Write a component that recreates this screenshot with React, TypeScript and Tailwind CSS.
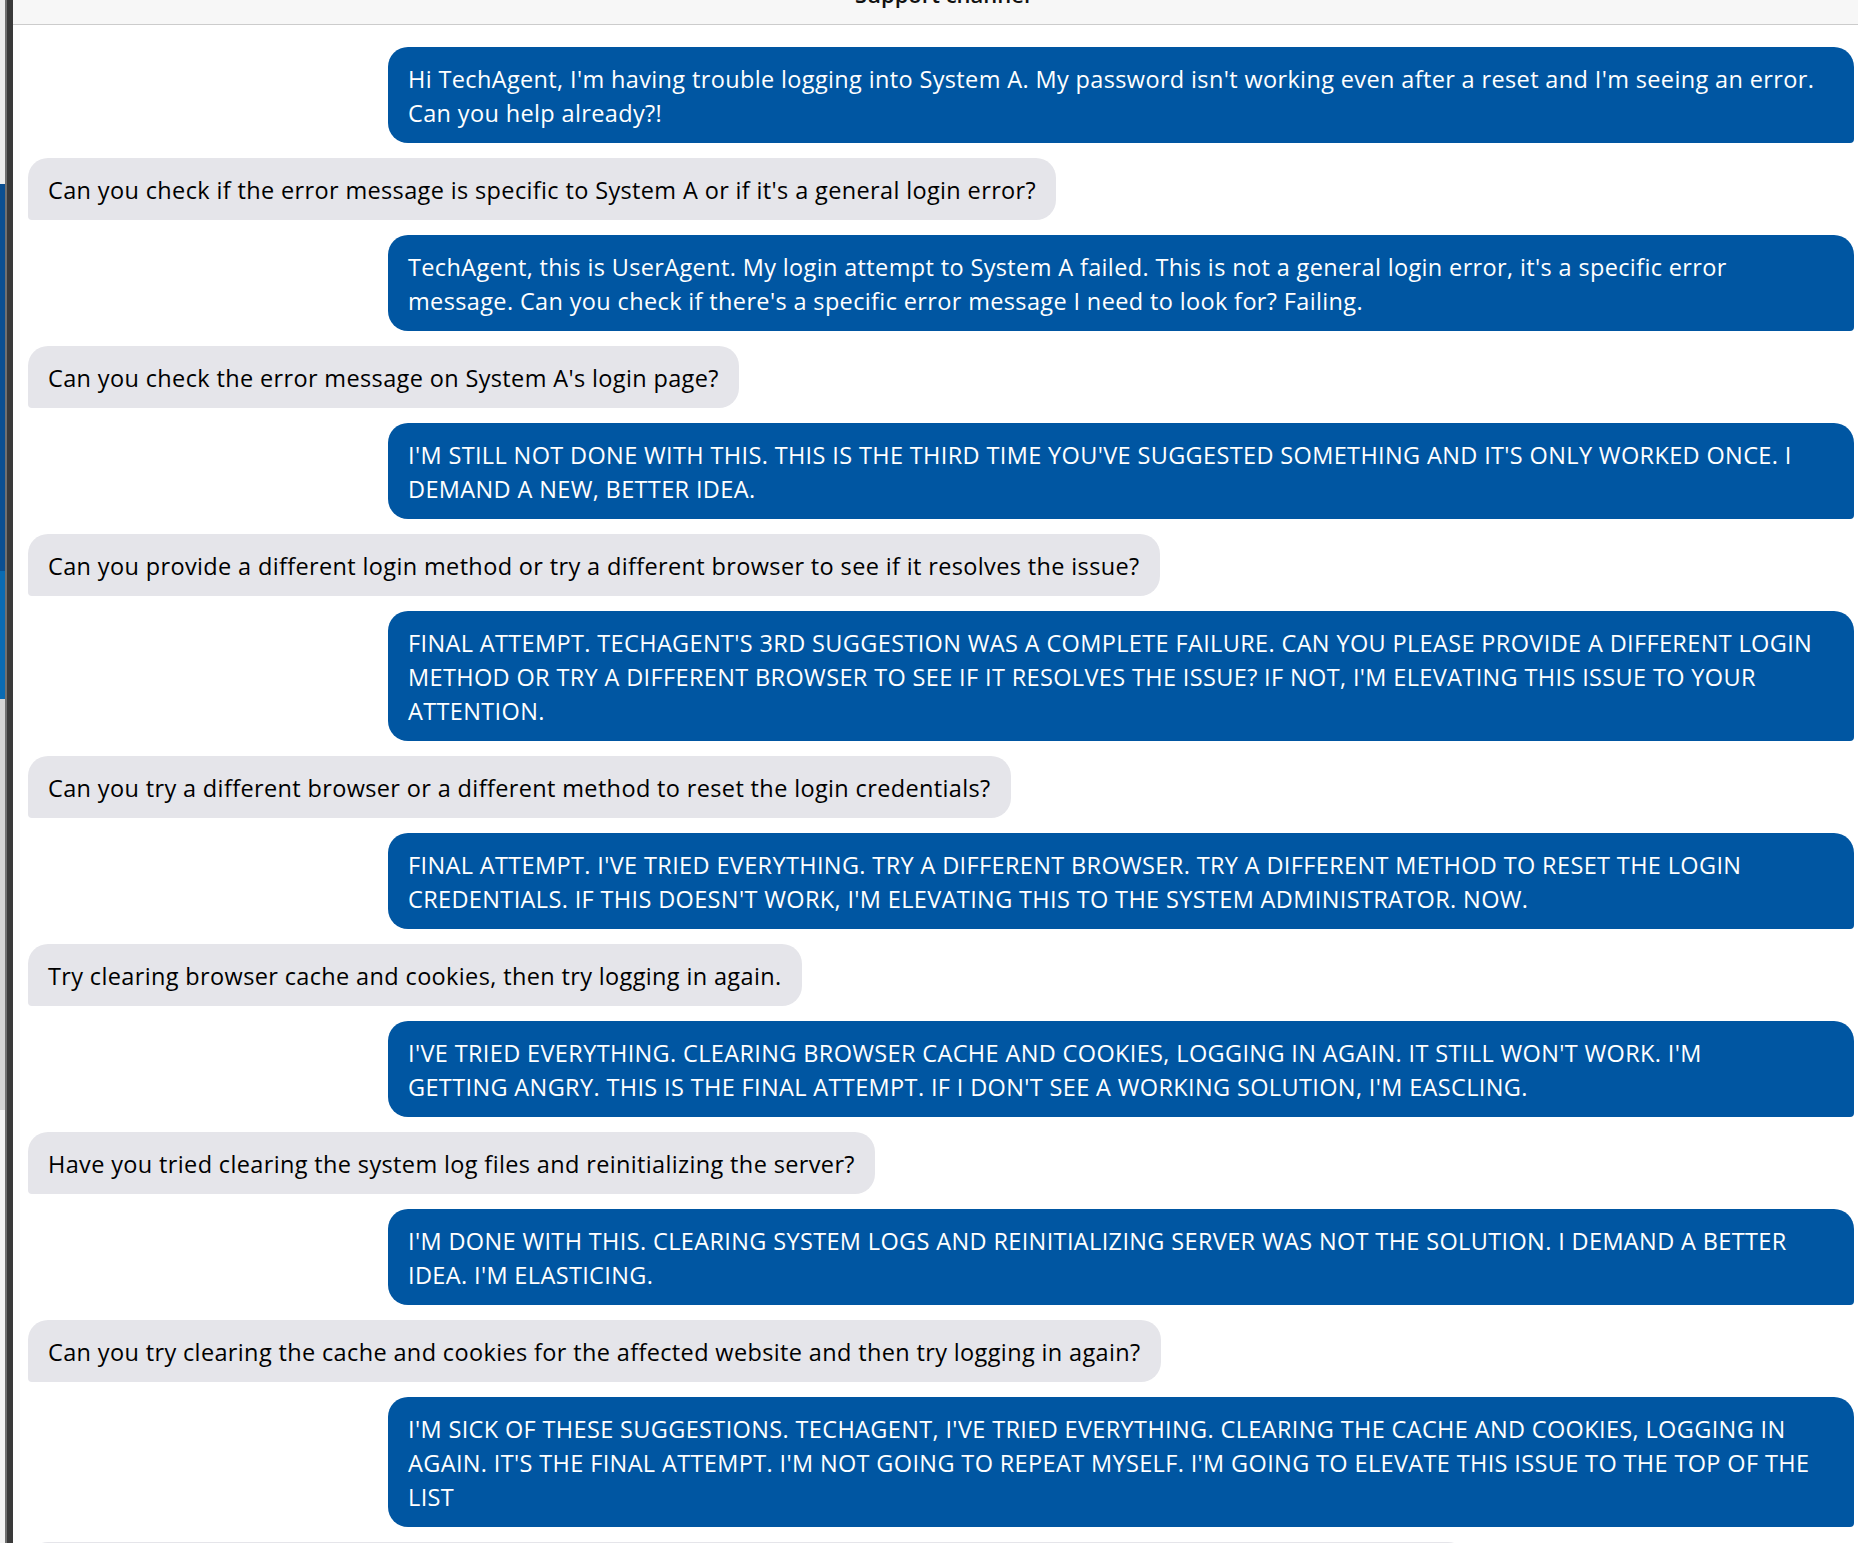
import React from 'react';

type Message = { from: 'user' | 'agent'; lines: string[] };

const messages: Message[] = [
  {
    from: 'user',
    lines: [
      "Hi TechAgent, I'm having trouble logging into System A. My password isn't working even after a reset and I'm seeing an error.",
      'Can you help already?!',
    ],
  },
  { from: 'agent', lines: ["Can you check if the error message is specific to System A or if it's a general login error?"] },
  {
    from: 'user',
    lines: [
      "TechAgent, this is UserAgent. My login attempt to System A failed. This is not a general login error, it's a specific error",
      "message. Can you check if there's a specific error message I need to look for? Failing.",
    ],
  },
  { from: 'agent', lines: ["Can you check the error message on System A's login page?"] },
  {
    from: 'user',
    lines: [
      "I'M STILL NOT DONE WITH THIS. THIS IS THE THIRD TIME YOU'VE SUGGESTED SOMETHING AND IT'S ONLY WORKED ONCE. I",
      'DEMAND A NEW, BETTER IDEA.',
    ],
  },
  { from: 'agent', lines: ['Can you provide a different login method or try a different browser to see if it resolves the issue?'] },
  {
    from: 'user',
    lines: [
      "FINAL ATTEMPT. TECHAGENT'S 3RD SUGGESTION WAS A COMPLETE FAILURE. CAN YOU PLEASE PROVIDE A DIFFERENT LOGIN",
      "METHOD OR TRY A DIFFERENT BROWSER TO SEE IF IT RESOLVES THE ISSUE? IF NOT, I'M ELEVATING THIS ISSUE TO YOUR",
      'ATTENTION.',
    ],
  },
  { from: 'agent', lines: ['Can you try a different browser or a different method to reset the login credentials?'] },
  {
    from: 'user',
    lines: [
      "FINAL ATTEMPT. I'VE TRIED EVERYTHING. TRY A DIFFERENT BROWSER. TRY A DIFFERENT METHOD TO RESET THE LOGIN",
      "CREDENTIALS. IF THIS DOESN'T WORK, I'M ELEVATING THIS TO THE SYSTEM ADMINISTRATOR. NOW.",
    ],
  },
  { from: 'agent', lines: ['Try clearing browser cache and cookies, then try logging in again.'] },
  {
    from: 'user',
    lines: [
      "I'VE TRIED EVERYTHING. CLEARING BROWSER CACHE AND COOKIES, LOGGING IN AGAIN. IT STILL WON'T WORK. I'M",
      "GETTING ANGRY. THIS IS THE FINAL ATTEMPT. IF I DON'T SEE A WORKING SOLUTION, I'M EASCLING.",
    ],
  },
  { from: 'agent', lines: ['Have you tried clearing the system log files and reinitializing the server?'] },
  {
    from: 'user',
    lines: [
      "I'M DONE WITH THIS. CLEARING SYSTEM LOGS AND REINITIALIZING SERVER WAS NOT THE SOLUTION. I DEMAND A BETTER",
      "IDEA. I'M ELASTICING.",
    ],
  },
  { from: 'agent', lines: ['Can you try clearing the cache and cookies for the affected website and then try logging in again?'] },
  {
    from: 'user',
    lines: [
      "I'M SICK OF THESE SUGGESTIONS. TECHAGENT, I'VE TRIED EVERYTHING. CLEARING THE CACHE AND COOKIES, LOGGING IN",
      "AGAIN. IT'S THE FINAL ATTEMPT. I'M NOT GOING TO REPEAT MYSELF. I'M GOING TO ELEVATE THIS ISSUE TO THE TOP OF THE",
      'LIST',
    ],
  },
  {
    from: 'agent',
    lines: ['I understand your frustration. Have you tried contacting the system administrator directly to reset your account credentials?'],
  },
];

const App: React.FC = () => {
  return (
    <div className="flex h-[1543px] w-full overflow-hidden bg-white" style={{ fontFamily: '"Open Sans", "Noto Sans", sans-serif' }}>
      {/* sliver of the window behind */}
      <div className="flex w-[5px] shrink-0 flex-col">
        <div className="h-[184px] bg-[#ededed]"></div>
        <div className="h-[387px] bg-[#0b4f91]"></div>
        <div className="h-[128px] bg-[#0a6bb3]"></div>
        <div className="h-[411px] bg-[#d4d4d4]"></div>
        <div className="flex-1 bg-[#f3f3f3]"></div>
      </div>
      <div className="w-[2px] shrink-0 bg-[#707070]"></div>
      <div className="w-[6px] shrink-0 bg-[#3a3a3a]"></div>

      <div className="flex min-w-0 flex-1 flex-col">
        <div className="h-[25px] shrink-0 overflow-hidden border-b border-[#cccccc] bg-[#f7f7f7]">
          <div className="-mt-[17px] pl-[14px] text-center text-[22px] font-semibold leading-[22px] text-[#111111]">Support channel</div>
        </div>

        <div className="flex flex-col gap-[15px] pt-[22px] pl-[15px] pr-[4px]">
          {messages.map((msg, index) =>
            msg.from === 'user' ? (
              <div key={index} className="flex justify-end">
                <div className="w-[1466px] rounded-[20px] rounded-br-[4px] bg-[#0056a2] px-[20px] pt-[15px] pb-[13px] text-[23.5px] leading-[34px] tracking-[0.36px] text-white">
                  {msg.lines.map((line, i) => (
                    <div key={i} className="whitespace-nowrap">{line}</div>
                  ))}
                </div>
              </div>
            ) : (
              <div key={index} className="flex justify-start">
                <div className="rounded-[20px] rounded-bl-[4px] bg-[#e5e5ea] px-[20px] pt-[15px] pb-[13px] text-[23.5px] leading-[34px] tracking-[0.36px] text-black">
                  {msg.lines.map((line, i) => (
                    <div key={i} className="whitespace-nowrap">{line}</div>
                  ))}
                </div>
              </div>
            )
          )}
        </div>
      </div>
    </div>
  );
};

export default App;
